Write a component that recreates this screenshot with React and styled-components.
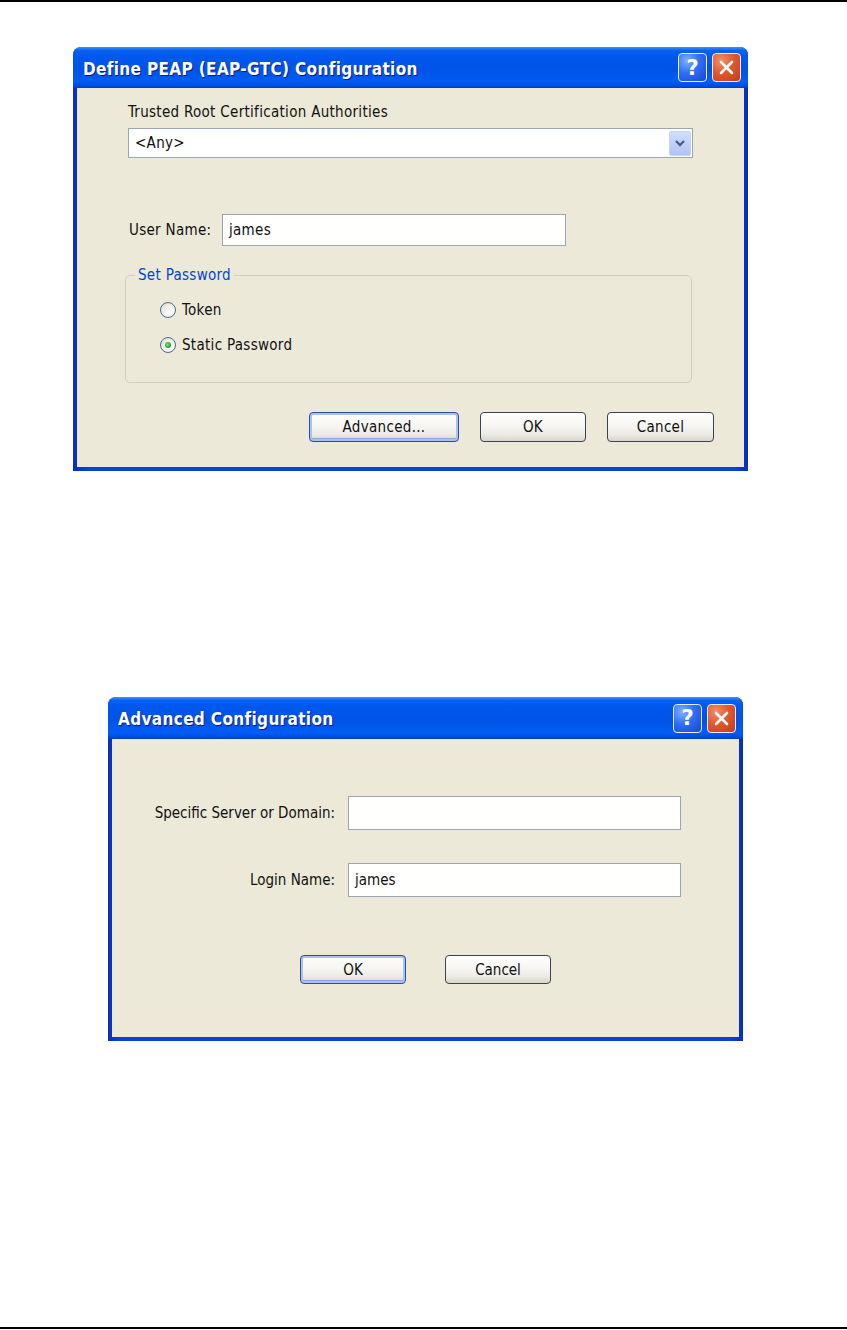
import React from "react";
import styled, { createGlobalStyle } from "styled-components";

const GlobalStyle = createGlobalStyle`
  html, body {
    margin: 0;
    padding: 0;
    background: #fff;
  }
  body {
    font-family: "DejaVu Sans Condensed", "DejaVu Sans", sans-serif;
    color: #111;
    letter-spacing: 0.3px;
  }
`;

const Page = styled.div`
  width: 847px;
  height: 1330px;
  display: flex;
  flex-direction: column;
`;

const Rule = styled.div`
  flex: none;
  height: 2px;
  background: #000;
`;

const BottomRule = styled(Rule)`
  margin-top: auto;
  margin-bottom: 1px;
`;

const Window = styled.div`
  flex: none;
  margin-left: ${(p) => p.$left}px;
  margin-top: ${(p) => p.$top}px;
  width: ${(p) => p.$width}px;
  height: ${(p) => p.$height}px;
  display: flex;
  flex-direction: column;
  border-radius: 8px 8px 0 0;
  overflow: hidden;
  letter-spacing: ${(p) => p.$spacing}px;
  background: linear-gradient(90deg, #0a2fb8 0%, #0842d9 2%, #0842d9 98%, #0a2fb8 100%);
`;

const TitleBar = styled.div`
  flex: none;
  height: ${(p) => p.$height}px;
  display: flex;
  align-items: center;
  justify-content: space-between;
  padding: 0 7px 0 10px;
  background: linear-gradient(
    180deg,
    #3d95ff 0%,
    #0a63f0 8%,
    #0058ee 20%,
    #0053e6 55%,
    #005df5 85%,
    #0049dd 96%,
    #003bc8 100%
  );
`;

const Title = styled.span`
  color: #fff;
  font-family: "DejaVu Sans Condensed", "DejaVu Sans", sans-serif;
  font-weight: bold;
  font-size: 17px;
  letter-spacing: 0.35px;
  text-shadow: 1px 1px 0 #0a1a8a;
  padding-top: 2px;
`;

const TitleButtons = styled.div`
  display: flex;
  gap: 5px;
`;

const CaptionButton = styled.div`
  width: 29px;
  height: 29px;
  box-sizing: border-box;
  border: 1px solid #e8eefc;
  border-radius: 4px;
  display: flex;
  align-items: center;
  justify-content: center;
  color: #fff;
  font-family: "DejaVu Sans", sans-serif;
  font-weight: bold;
  font-size: 21px;
  letter-spacing: 0;
  background: ${(p) =>
    p.$close
      ? "radial-gradient(circle at 30% 25%, #f0906a 0%, #e2582e 45%, #c23d14 100%)"
      : "radial-gradient(circle at 30% 25%, #7fb0ff 0%, #2f6ff2 45%, #1845d4 100%)"};
`;

const Body = styled.div`
  flex: 1;
  margin: 0 4px 4px;
  background: #ece9d8;
  display: flex;
  flex-direction: column;
  padding: ${(p) => p.$pad};
`;

const Label = styled.div`
  font-size: 15px;
  line-height: 20px;
  white-space: nowrap;
`;

const Combo = styled.div`
  margin-top: 6px;
  width: 565px;
  height: 30px;
  box-sizing: border-box;
  border: 1px solid #9aa6b2;
  background: #fff;
  display: flex;
  align-items: center;
  justify-content: space-between;
  padding: 0 1px 0 6px;
  font-size: 15px;
`;

const DropButton = styled.div`
  width: 22px;
  height: 25px;
  box-sizing: border-box;
  border: 1px solid #c3d3fb;
  border-radius: 2px;
  background: linear-gradient(180deg, #d2defc 0%, #bccefa 60%, #b0c4f5 100%);
  display: flex;
  align-items: center;
  justify-content: center;
`;

const FieldRow = styled.div`
  display: flex;
  align-items: center;
  margin-top: ${(p) => p.$top}px;
`;

const RowLabel = styled(Label)`
  width: ${(p) => p.$width}px;
  padding-left: 1px;
`;

const TextBox = styled.div`
  width: ${(p) => p.$width}px;
  height: ${(p) => p.$height}px;
  box-sizing: border-box;
  border: 1px solid #9aa6b2;
  background: #fffffe;
  display: flex;
  align-items: center;
  padding-left: 6px;
  font-size: 15px;
`;

const Group = styled.fieldset`
  margin: 20px 0 0 -3px;
  width: 567px;
  box-sizing: border-box;
  border: 1px solid #d0d0bf;
  border-radius: 5px;
  padding: 8px 0 20px 34px;
  min-width: 0;
`;

const Legend = styled.legend`
  margin-left: -25px;
  padding: 0 3px 0 3px;
  color: #0046d5;
  font-size: 15px;
  line-height: 18px;
`;

const RadioRow = styled.div`
  height: 35px;
  display: flex;
  align-items: center;
  gap: 6px;
  font-size: 15px;
`;

const RadioCircle = styled.div`
  width: 16px;
  height: 16px;
  box-sizing: border-box;
  border-radius: 50%;
  border: 1px solid #4c6a8a;
  background: radial-gradient(circle at 65% 65%, #ffffff 0%, #ecebe4 60%, #d3d1c6 100%);
  display: flex;
  align-items: center;
  justify-content: center;
  &::after {
    content: "";
    display: ${(p) => (p.$checked ? "block" : "none")};
    width: 6px;
    height: 6px;
    border-radius: 50%;
    background: radial-gradient(circle at 40% 40%, #7be07b 0%, #21a121 70%);
  }
`;

const ButtonRow = styled.div`
  display: flex;
  justify-content: ${(p) => p.$justify};
  gap: ${(p) => p.$gap}px;
  margin-top: ${(p) => p.$top}px;
`;

const Button = styled.div`
  width: ${(p) => p.$width}px;
  height: ${(p) => p.$height}px;
  box-sizing: border-box;
  border: 1px solid ${(p) => (p.$focus ? "#2c4c9c" : "#3c4350")};
  border-radius: 4px;
  background: linear-gradient(180deg, #ffffff 0%, #f7f6f2 45%, #ecebe6 75%, #d9d5cc 100%);
  box-shadow: ${(p) =>
    p.$focus ? "inset 0 0 0 2px #a9c2f2, inset 0 -1px 0 2px #86a8e8" : "none"};
  display: flex;
  align-items: center;
  justify-content: center;
  font-size: 15px;
`;

const FormGrid = styled.div`
  display: grid;
  grid-template-columns: 223px 333px;
  column-gap: 13px;
  row-gap: 33px;
  align-items: center;
`;

const GridLabel = styled(Label)`
  text-align: right;
`;

function Caption({ title, height }) {
  return (
    <TitleBar $height={height}>
      <Title>{title}</Title>
      <TitleButtons>
        <CaptionButton>?</CaptionButton>
        <CaptionButton $close>
          <svg width="17" height="17" viewBox="0 0 17 17">
            <path
              d="M3 3 L14 14 M14 3 L3 14"
              stroke="#fff"
              strokeWidth="2.6"
              strokeLinecap="round"
            />
          </svg>
        </CaptionButton>
      </TitleButtons>
    </TitleBar>
  );
}

export default function App() {
  return (
    <Page>
      <GlobalStyle />
      <Rule />

      <Window $left={73} $top={45} $width={675} $height={424} $spacing={0.3}>
        <Caption title="Define PEAP (EAP-GTC) Configuration" height={41} />
        <Body $pad="14px 30px 0 51px">
          <Label>Trusted Root Certification Authorities</Label>
          <Combo>
            <span>&lt;Any&gt;</span>
            <DropButton>
              <svg width="12" height="9" viewBox="0 0 12 9">
                <path
                  d="M2 2 L6 6 L10 2"
                  fill="none"
                  stroke="#4d6185"
                  strokeWidth="2.4"
                />
              </svg>
            </DropButton>
          </Combo>

          <FieldRow $top={56}>
            <RowLabel $width={93}>User Name:</RowLabel>
            <TextBox $width={344} $height={32}>
              james
            </TextBox>
          </FieldRow>

          <Group>
            <Legend>Set Password</Legend>
            <RadioRow>
              <RadioCircle />
              Token
            </RadioRow>
            <RadioRow>
              <RadioCircle $checked />
              Static Password
            </RadioRow>
          </Group>

          <ButtonRow $justify="flex-end" $gap={21} $top={29}>
            <Button $width={150} $height={30} $focus>
              Advanced...
            </Button>
            <Button $width={106} $height={30}>
              OK
            </Button>
            <Button $width={107} $height={30}>
              Cancel
            </Button>
          </ButtonRow>
        </Body>
      </Window>

      <Window $left={108} $top={226} $width={635} $height={344} $spacing={0}>
        <Caption title="Advanced Configuration" height={42} />
        <Body $pad="57px 0 0 0">
          <FormGrid>
            <GridLabel>Specific Server or Domain:</GridLabel>
            <TextBox $width={333} $height={34} />
            <GridLabel>Login Name:</GridLabel>
            <TextBox $width={333} $height={34}>
              james
            </TextBox>
          </FormGrid>
          <ButtonRow $justify="center" $gap={39} $top={58}>
            <Button $width={106} $height={29} $focus>
              OK
            </Button>
            <Button $width={106} $height={29}>
              Cancel
            </Button>
          </ButtonRow>
        </Body>
      </Window>

      <BottomRule />
    </Page>
  );
}
